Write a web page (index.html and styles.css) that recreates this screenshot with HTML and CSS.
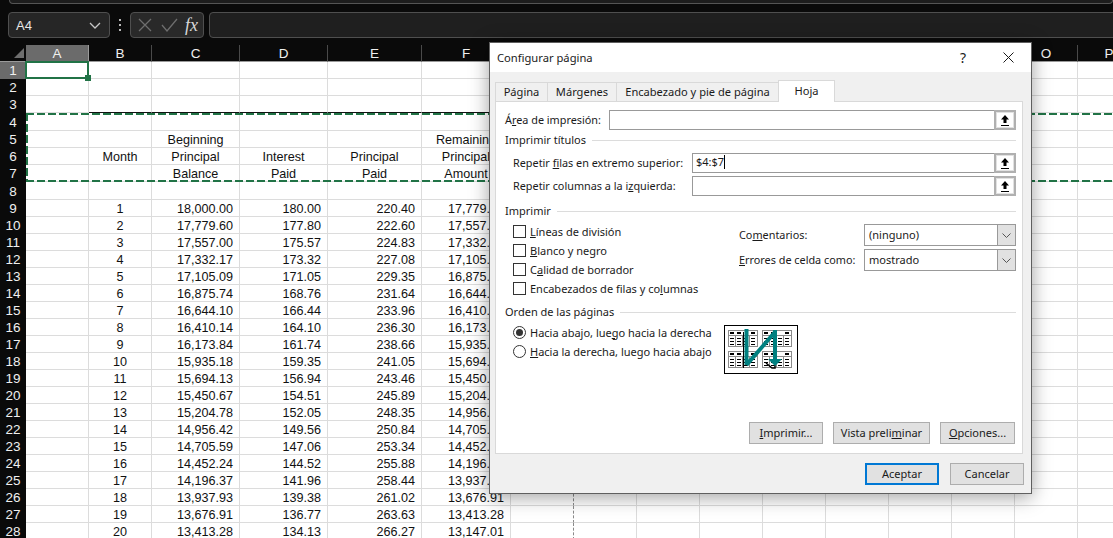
FILE: index.html
```html
<!DOCTYPE html>
<html lang="es">
<head>
<meta charset="utf-8">
<title>Configurar página</title>
<link rel="stylesheet" href="styles.css">
</head>
<body>
<div class="app">
  <div class="topstrip"><div class="search"></div></div>
  <div class="formula">
    <div class="namebox"><span>A4</span>
      <svg class="chev" width="12" height="7" viewBox="0 0 12 7"><path d="M1 1l5 5 5-5" fill="none" stroke="#c8c8c8" stroke-width="1.3"/></svg>
    </div>
    <div class="dots"><i></i><i></i><i></i></div>
    <div class="fxgroup">
      <svg width="14" height="14" viewBox="0 0 14 14"><path d="M1 1l12 12M13 1L1 13" fill="none" stroke="#6e6e6e" stroke-width="1.3"/></svg>
      <svg width="17" height="14" viewBox="0 0 17 14"><path d="M1 7l5 6L16 1" fill="none" stroke="#6e6e6e" stroke-width="1.3"/></svg>
      <span class="fx">fx</span>
    </div>
    <div class="fbar"></div>
  </div>
  <div class="sheet">
    <table class="grid">
      <colgroup><col class="c-h"><col class="c63"><col class="c63"><col class="c88"><col class="c88"><col class="c94"><col class="c89"><col class="c63"><col class="c63"><col class="c63"><col class="c63"><col class="c63"><col class="c63"><col class="c63"><col class="c63"><col class="c63"><col class="c63"></colgroup>
      <tr class="cols"><th class="corner"><svg width="10" height="10" viewBox="0 0 10 10"><path d="M10 0v10H0z" fill="#6e6e6e"/></svg></th><th class="sel">A</th><th>B</th><th>C</th><th>D</th><th>E</th><th>F</th><th></th><th></th><th></th><th></th><th></th><th></th><th></th><th></th><th>O</th><th>P</th></tr>
      <tr><th class="sel">1</th><td></td><td></td><td></td><td></td><td></td><td></td><td class="brk"></td><td></td><td></td><td></td><td></td><td></td><td></td><td></td><td></td><td></td></tr>
      <tr><th>2</th><td></td><td></td><td></td><td></td><td></td><td></td><td class="brk"></td><td></td><td></td><td></td><td></td><td></td><td></td><td></td><td></td><td></td></tr>
      <tr><th>3</th><td></td><td class="rule"></td><td class="rule"></td><td class="rule"></td><td class="rule"></td><td class="rule"></td><td class="brk"></td><td></td><td></td><td></td><td></td><td></td><td></td><td></td><td></td><td></td></tr>
      <tr class="tall"><th>4</th><td></td><td></td><td></td><td></td><td></td><td></td><td class="brk"></td><td></td><td></td><td></td><td></td><td></td><td></td><td></td><td></td><td></td></tr>
      <tr><th>5</th><td></td><td></td><td class="ct">Beginning</td><td></td><td></td><td class="ct">Remaining</td><td class="brk"></td><td></td><td></td><td></td><td></td><td></td><td></td><td></td><td></td><td></td></tr>
      <tr><th>6</th><td></td><td class="ct">Month</td><td class="ct">Principal</td><td class="ct">Interest</td><td class="ct">Principal</td><td class="ct">Principal</td><td class="brk"></td><td></td><td></td><td></td><td></td><td></td><td></td><td></td><td></td><td></td></tr>
      <tr><th>7</th><td></td><td></td><td class="ct">Balance</td><td class="ct">Paid</td><td class="ct">Paid</td><td class="ct">Amount</td><td class="brk"></td><td></td><td></td><td></td><td></td><td></td><td></td><td></td><td></td><td></td></tr>
      <tr class="tall"><th>8</th><td></td><td></td><td></td><td></td><td></td><td></td><td class="brk"></td><td></td><td></td><td></td><td></td><td></td><td></td><td></td><td></td><td></td></tr>
      <tr><th>9</th><td></td><td class="ct">1</td><td class="nm">18,000.00</td><td class="nm">180.00</td><td class="nm">220.40</td><td class="nm">17,779.60</td><td class="brk"></td><td></td><td></td><td></td><td></td><td></td><td></td><td></td><td></td><td></td></tr>
      <tr><th>10</th><td></td><td class="ct">2</td><td class="nm">17,779.60</td><td class="nm">177.80</td><td class="nm">222.60</td><td class="nm">17,557.00</td><td class="brk"></td><td></td><td></td><td></td><td></td><td></td><td></td><td></td><td></td><td></td></tr>
      <tr><th>11</th><td></td><td class="ct">3</td><td class="nm">17,557.00</td><td class="nm">175.57</td><td class="nm">224.83</td><td class="nm">17,332.17</td><td class="brk"></td><td></td><td></td><td></td><td></td><td></td><td></td><td></td><td></td><td></td></tr>
      <tr><th>12</th><td></td><td class="ct">4</td><td class="nm">17,332.17</td><td class="nm">173.32</td><td class="nm">227.08</td><td class="nm">17,105.09</td><td class="brk"></td><td></td><td></td><td></td><td></td><td></td><td></td><td></td><td></td><td></td></tr>
      <tr><th>13</th><td></td><td class="ct">5</td><td class="nm">17,105.09</td><td class="nm">171.05</td><td class="nm">229.35</td><td class="nm">16,875.74</td><td class="brk"></td><td></td><td></td><td></td><td></td><td></td><td></td><td></td><td></td><td></td></tr>
      <tr><th>14</th><td></td><td class="ct">6</td><td class="nm">16,875.74</td><td class="nm">168.76</td><td class="nm">231.64</td><td class="nm">16,644.10</td><td class="brk"></td><td></td><td></td><td></td><td></td><td></td><td></td><td></td><td></td><td></td></tr>
      <tr><th>15</th><td></td><td class="ct">7</td><td class="nm">16,644.10</td><td class="nm">166.44</td><td class="nm">233.96</td><td class="nm">16,410.14</td><td class="brk"></td><td></td><td></td><td></td><td></td><td></td><td></td><td></td><td></td><td></td></tr>
      <tr><th>16</th><td></td><td class="ct">8</td><td class="nm">16,410.14</td><td class="nm">164.10</td><td class="nm">236.30</td><td class="nm">16,173.84</td><td class="brk"></td><td></td><td></td><td></td><td></td><td></td><td></td><td></td><td></td><td></td></tr>
      <tr><th>17</th><td></td><td class="ct">9</td><td class="nm">16,173.84</td><td class="nm">161.74</td><td class="nm">238.66</td><td class="nm">15,935.18</td><td class="brk"></td><td></td><td></td><td></td><td></td><td></td><td></td><td></td><td></td><td></td></tr>
      <tr><th>18</th><td></td><td class="ct">10</td><td class="nm">15,935.18</td><td class="nm">159.35</td><td class="nm">241.05</td><td class="nm">15,694.13</td><td class="brk"></td><td></td><td></td><td></td><td></td><td></td><td></td><td></td><td></td><td></td></tr>
      <tr><th>19</th><td></td><td class="ct">11</td><td class="nm">15,694.13</td><td class="nm">156.94</td><td class="nm">243.46</td><td class="nm">15,450.67</td><td class="brk"></td><td></td><td></td><td></td><td></td><td></td><td></td><td></td><td></td><td></td></tr>
      <tr><th>20</th><td></td><td class="ct">12</td><td class="nm">15,450.67</td><td class="nm">154.51</td><td class="nm">245.89</td><td class="nm">15,204.78</td><td class="brk"></td><td></td><td></td><td></td><td></td><td></td><td></td><td></td><td></td><td></td></tr>
      <tr><th>21</th><td></td><td class="ct">13</td><td class="nm">15,204.78</td><td class="nm">152.05</td><td class="nm">248.35</td><td class="nm">14,956.42</td><td class="brk"></td><td></td><td></td><td></td><td></td><td></td><td></td><td></td><td></td><td></td></tr>
      <tr><th>22</th><td></td><td class="ct">14</td><td class="nm">14,956.42</td><td class="nm">149.56</td><td class="nm">250.84</td><td class="nm">14,705.59</td><td class="brk"></td><td></td><td></td><td></td><td></td><td></td><td></td><td></td><td></td><td></td></tr>
      <tr><th>23</th><td></td><td class="ct">15</td><td class="nm">14,705.59</td><td class="nm">147.06</td><td class="nm">253.34</td><td class="nm">14,452.24</td><td class="brk"></td><td></td><td></td><td></td><td></td><td></td><td></td><td></td><td></td><td></td></tr>
      <tr><th>24</th><td></td><td class="ct">16</td><td class="nm">14,452.24</td><td class="nm">144.52</td><td class="nm">255.88</td><td class="nm">14,196.37</td><td class="brk"></td><td></td><td></td><td></td><td></td><td></td><td></td><td></td><td></td><td></td></tr>
      <tr><th>25</th><td></td><td class="ct">17</td><td class="nm">14,196.37</td><td class="nm">141.96</td><td class="nm">258.44</td><td class="nm">13,937.93</td><td class="brk"></td><td></td><td></td><td></td><td></td><td></td><td></td><td></td><td></td><td></td></tr>
      <tr><th>26</th><td></td><td class="ct">18</td><td class="nm">13,937.93</td><td class="nm">139.38</td><td class="nm">261.02</td><td class="nm">13,676.91</td><td class="brk"></td><td></td><td></td><td></td><td></td><td></td><td></td><td></td><td></td><td></td></tr>
      <tr><th>27</th><td></td><td class="ct">19</td><td class="nm">13,676.91</td><td class="nm">136.77</td><td class="nm">263.63</td><td class="nm">13,413.28</td><td class="brk"></td><td></td><td></td><td></td><td></td><td></td><td></td><td></td><td></td><td></td></tr>
      <tr><th>28</th><td></td><td class="ct">20</td><td class="nm">13,413.28</td><td class="nm">134.13</td><td class="nm">266.27</td><td class="nm">13,147.01</td><td class="brk"></td><td></td><td></td><td></td><td></td><td></td><td></td><td></td><td></td><td></td></tr>
    </table>
    <div class="cursor"><i class="handle"></i></div>
    <div class="ants"></div>
  </div>

  <div class="dialog">
    <div class="titlebar">
      <span class="title">Configurar página</span>
      <span class="help">?</span>
      <svg class="close" width="11" height="11" viewBox="0 0 11 11"><path d="M.5.5l10 10M10.5.5l-10 10" fill="none" stroke="#1a1a1a" stroke-width="1"/></svg>
    </div>
    <div class="dbody">
      <div class="tabs">
        <div class="tab t1">Página</div>
        <div class="tab t2">Márgenes</div>
        <div class="tab t3">Encabezado y pie de página</div>
        <div class="tab t4 active">Hoja</div>
      </div>
      <div class="panel">
        <div class="field f-area"><label>Á<u>r</u>ea de impresión:</label>
          <div class="input"><span class="val"></span><div class="rbtn"><svg width="8" height="11" viewBox="0 0 8 11"><path d="M4 0l4 4.500H5.500V8h-3V4.500H0zM0 10h8v1H0z" fill="#000"/></svg></div></div>
        </div>
        <div class="legend l-titulos"><span>Imprimir títulos</span><hr></div>
        <div class="field f-sub"><label>Repetir <u>f</u>ilas en extremo superior:</label>
          <div class="input"><span class="val">$4:$7<b class="caret"></b></span><div class="rbtn"><svg width="8" height="11" viewBox="0 0 8 11"><path d="M4 0l4 4.500H5.500V8h-3V4.500H0zM0 10h8v1H0z" fill="#000"/></svg></div></div>
        </div>
        <div class="field f-sub f-next"><label>Repetir columnas a la i<u>z</u>quierda:</label>
          <div class="input"><span class="val"></span><div class="rbtn"><svg width="8" height="11" viewBox="0 0 8 11"><path d="M4 0l4 4.500H5.500V8h-3V4.500H0zM0 10h8v1H0z" fill="#000"/></svg></div></div>
        </div>
        <div class="legend l-imprimir"><span>Imprimir</span><hr></div>
        <div class="printopts">
          <div class="checks">
            <div class="opt"><i class="cb"></i><span><u>L</u>íneas de división</span></div>
            <div class="opt"><i class="cb"></i><span><u>B</u>lanco y negro</span></div>
            <div class="opt"><i class="cb"></i><span>C<u>a</u>lidad de borrador</span></div>
            <div class="opt"><i class="cb"></i><span>Encabezados de filas y co<u>l</u>umnas</span></div>
          </div>
          <div class="selects">
            <div class="selrow"><label>Co<u>m</u>entarios:</label><div class="select"><span>(ninguno)</span><div class="sbtn"><svg width="9" height="5" viewBox="0 0 9 5"><path d="M.5.5l4 4 4-4" fill="none" stroke="#555" stroke-width="1"/></svg></div></div></div>
            <div class="selrow"><label><u>E</u>rrores de celda como:</label><div class="select"><span>mostrado</span><div class="sbtn"><svg width="9" height="5" viewBox="0 0 9 5"><path d="M.5.5l4 4 4-4" fill="none" stroke="#555" stroke-width="1"/></svg></div></div></div>
          </div>
        </div>
        <div class="legend l-orden"><span>Orden de las páginas</span><hr></div>
        <div class="order">
          <div class="radios">
            <div class="opt"><i class="rb on"></i><span>Hacia abajo, lue<u>g</u>o hacia la derecha</span></div>
            <div class="opt"><i class="rb"></i><span><u>H</u>acia la derecha, luego hacia abajo</span></div>
          </div>
          <svg class="preview" width="74" height="49" viewBox="0 0 74 49">
            <defs>
              <g id="mini">
                <rect x=".5" y=".5" width="29" height="16" fill="#fff" stroke="#8a8a8a"/>
                <path d="M1 5.500h28M7.500 5v11M14.500 5v11M21.500 5v11" stroke="#8a8a8a" fill="none"/>
                <path d="M2 2h4v2H2zM9 2h4v2H9zM23 2h4v2h-4z" fill="#000"/>
                <path d="M2 8.500h4M2 11.500h4M2 14.500h4M9 8.500h4M9 11.500h4M9 14.500h4M16 8.500h4M16 11.500h4M16 14.500h4M23 8.500h4M23 11.500h4M23 14.500h4" stroke="#000" fill="none"/>
              </g>
            </defs>
            <rect x=".5" y=".5" width="73" height="48" fill="#fff" stroke="#000"/>
            <use href="#mini" x="4" y="5"/><use href="#mini" x="38" y="5"/>
            <use href="#mini" x="4" y="26"/><use href="#mini" x="38" y="26"/>
            <path d="M19.500 7v36" stroke="#000" fill="none"/>
            <path d="M42 38l6 5h3v-6" stroke="#000" stroke-width="1.500" fill="none"/>
            <path d="M22.500 4v36M22.500 40L51 7" stroke="#008080" stroke-width="4" fill="none"/>
            <path d="M49 5h4v29h5l-7 7-7-7h5z" fill="#008080"/>
          </svg>
        </div>
        <div class="actions">
          <button class="btn b-print"><u>I</u>mprimir...</button>
          <button class="btn b-prev">Vista preli<u>m</u>inar</button>
          <button class="btn b-opts"><u>O</u>pciones...</button>
        </div>
      </div>
      <div class="footer">
        <button class="btn b-ok">Aceptar</button>
        <button class="btn b-cancel">Cancelar</button>
      </div>
    </div>
  </div>
</div>
</body>
</html>
```
FILE: styles.css
```css
* { box-sizing: border-box; }
html, body { margin: 0; padding: 0; height: 100%; overflow: hidden; background: #fff; }
.app { position: relative; width: 1113px; height: 538px; overflow: hidden; background: #0a0a0a; font-family: "Liberation Sans", Arial, sans-serif; }

.topstrip { height: 12px; overflow: hidden; }
.search { height: 4px; margin-left: 9px; border: 1px solid #555; border-top: 0; border-radius: 0 0 5px 5px; background: #1d1d1d; }

.formula { display: flex; align-items: stretch; height: 26px; }
.namebox { display: flex; align-items: center; justify-content: space-between; width: 102px; margin-left: 8px; padding: 0 8px 0 7px; background: #262626; border: 1px solid #4f4f4f; border-radius: 4px; color: #e8e8e8; font-size: 13px; }
.dots { display: flex; flex-direction: column; justify-content: center; gap: 3px; width: 20px; align-items: center; }
.dots i { display: block; width: 2px; height: 2px; background: #b8b8b8; }
.fxgroup { display: flex; align-items: center; width: 74px; padding-left: 7px; background: #292929; border: 1px solid #4f4f4f; border-radius: 4px; }
.fxgroup svg + svg { margin-left: 9px; }
.fx { margin-left: 7px; color: #d8d8d8; font-family: "Liberation Serif", serif; font-style: italic; font-size: 18px; }
.fbar { flex: 1; margin-left: 5px; margin-right: -8px; background: #1f1f1f; border: 1px solid #4f4f4f; border-radius: 4px; }

.sheet { position: relative; margin-top: 7px; height: 493px; overflow: hidden; background: #fff; }
.grid { table-layout: fixed; width: 1141px; border-collapse: separate; border-spacing: 0; font-size: 12.6px; color: #111; }
.c-h { width: 26px; } .c63 { width: 63px; } .c88 { width: 88px; } .c89 { width: 89px; } .c94 { width: 94px; }
.grid tr { height: 17px; }
.grid tr.tall { height: 18px; }
.grid td { padding: 0; border-right: 1px solid #dcdcdc; border-bottom: 1px solid #dcdcdc; background: #fff; white-space: nowrap; overflow: hidden; line-height: 13px; vertical-align: bottom; }
.grid td.rule { border-bottom: 1px solid #111; }
.grid td.brk { border-right: 1px dashed #8a8a8a; }
.grid td.ct { text-align: center; }
.grid td.nm { text-align: right; padding-right: 6px; }
.grid th { padding: 0; background: #0a0a0a; color: #f0f0f0; font-weight: 400; font-size: 13.5px; line-height: 15px; text-align: center; overflow: hidden; }
.cols th { padding-top: 1px; border-right: 1px solid #4a4a4a; border-bottom: 1px solid #9a9a9a; }
.cols th.corner { border-right: 0; text-align: right; padding: 0 2px 0 0; line-height: 0; vertical-align: middle; }
.cols th.sel { border-right-color: #9a9a9a; }
.grid th.sel { background: #6b6b6b; }

.cursor { position: absolute; left: 25px; top: 16px; width: 64px; height: 18px; border: 2px solid #217346; }
.handle { position: absolute; right: -4px; bottom: -4px; width: 6px; height: 6px; background: #217346; }
.ants { position: absolute; left: 26px; top: 68px; width: 1100px; height: 69px;
  background:
    repeating-linear-gradient(90deg, #217346 0 8px, transparent 8px 11px) left top / 100% 2px no-repeat,
    repeating-linear-gradient(90deg, #217346 0 8px, transparent 8px 11px) left bottom / 100% 2px no-repeat,
    repeating-linear-gradient(180deg, #217346 0 8px, transparent 8px 11px) left top / 2px 100% no-repeat; }

.dialog { position: absolute; left: 489px; top: 42px; width: 543px; height: 452px; display: flex; flex-direction: column; background: #f0f0f0; border: 1px solid #5f5f5f; box-shadow: 0 3px 18px rgba(0,0,0,.38); font-family: "Noto Sans", sans-serif; font-size: 11px; color: #1a1a1a; }
.titlebar { display: flex; align-items: center; height: 29px; padding: 0 17px 1px 7px; background: #fff; flex: none; }
.title { flex: 1; font-size: 11.2px; }
.help { font-size: 14px; margin-right: 37px; }
.dbody { flex: 1; display: flex; flex-direction: column; padding: 8px 7px 0 5px; }
.tabs { display: flex; height: 21px; align-items: flex-end; }
.tab { height: 19px; padding-top: 1px; text-align: center; font-size: 11.1px; background: #f0f0f0; border: 1px solid #d9d9d9; border-bottom: 0; border-left-width: 0; white-space: nowrap; }
.t1 { width: 53px; border-left-width: 1px; } .t2 { width: 69px; } .t3 { width: 162px; }
.t4 { width: 57px; height: 22px; padding-top: 2px; background: #fff; margin-bottom: -1px; position: relative; z-index: 1; border-left-width: 1px; margin-left: -1px; }
.panel { height: 353px; background: #fff; border: 1px solid #d9d9d9; padding: 0 6px 0 9px; display: flex; flex-direction: column; width: 528px; }
.field { display: flex; align-items: center; height: 20px; justify-content: space-between; flex: none; }
.field label { padding-bottom: 2px; font-size: 10.85px; }
.f-area { margin-top: 8px; }
.f-sub { padding-left: 8px; margin-top: 5px; }
.f-next { margin-top: 3px; }
.f-area .input { width: 407px; }
.f-sub .input { width: 324px; }
.input { display: flex; height: 20px; background: #fff; border: 1px solid #999; }
.val { flex: 1; padding-left: 3px; line-height: 16px; }
.caret { display: inline-block; width: 1px; height: 14px; margin-left: 0; background: #000; vertical-align: -3px; }
.rbtn { display: flex; align-items: center; justify-content: center; width: 22px; height: 20px; margin: -1px -1px -1px 0; background: #fff; border: 2px solid #b0b0b0; outline: 1px solid #e1e1e1; outline-offset: -3px; }
.legend { display: flex; align-items: center; height: 16px; flex: none; }
.legend span { padding-bottom: 1px; }
.legend hr { flex: 1; margin: 0 0 0 6px; height: 1px; border: 0; background: #dcdcdc; }
.l-titulos { margin-top: 2px; }
.l-imprimir { margin-top: 7px; }
.l-orden { margin-top: 1px; }
.printopts { display: flex; flex: none; margin-top: 3px; height: 81px; padding-left: 8px; }
.checks { width: 226px; }
.opt { display: flex; align-items: center; height: 19px; gap: 4px; white-space: nowrap; }
.opt span { padding-bottom: 1px; }
.cb { width: 13px; height: 13px; background: #fff; border: 1px solid #333; flex: none; }
.rb { position: relative; width: 13px; height: 13px; background: #fff; border: 1px solid #333; border-radius: 50%; flex: none; }
.rb.on::after { content: ""; position: absolute; left: 2px; top: 2px; width: 7px; height: 7px; border-radius: 50%; background: #333; }
.selects { flex: 1; display: flex; flex-direction: column; gap: 3px; padding-top: 2px; }
.selrow { display: flex; align-items: center; }
.selrow label { width: 125px; flex: none; padding-bottom: 1px; font-size: 10.85px; }
.select { flex: 1; display: flex; height: 22px; background: #fff; border: 1px solid #999; }
.select span { flex: 1; padding-left: 4px; line-height: 19px; }
.sbtn { display: flex; align-items: center; justify-content: center; width: 18px; background: #e1e1e1; border-left: 1px solid #999; }
.order { display: flex; flex: none; height: 60px; padding-left: 8px; margin-top: 3px; }
.radios { width: 211px; }
.preview { margin-top: 2px; }
.actions { display: flex; flex: none; gap: 10px; justify-content: flex-end; margin-top: 39px; padding-right: 1px; }
.btn { height: 22px; padding: 0 0 2px; background: #e1e1e1; border: 1px solid #adadad; color: #1a1a1a; font: inherit; white-space: nowrap; }
.b-print { width: 74px; } .b-prev { width: 97px; } .b-opts { width: 75px; }
.footer { display: flex; justify-content: flex-end; gap: 11px; margin-top: 9px; }
.b-ok { width: 74px; border: 2px solid #0078d4; }
.b-cancel { width: 74px; }
```
